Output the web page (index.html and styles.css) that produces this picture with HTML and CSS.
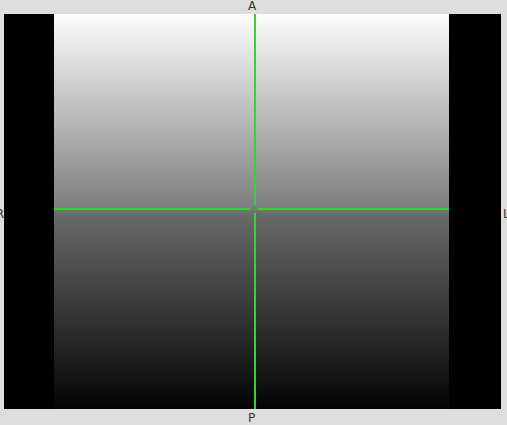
FILE: index.html
```html
<!DOCTYPE html>
<html>
<head>
<meta charset="utf-8">
<link rel="stylesheet" href="styles.css">
</head>
<body>
<div class="viewer">
  <div class="lbl top">A</div>
  <div class="lbl left">R</div>
  <div class="canvas">
    <div class="slice">
      <div class="hline hl1"></div>
      <div class="hline hl2"></div>
      <div class="vline vl1"></div>
      <div class="vline vl2"></div>
    </div>
  </div>
  <div class="lbl right">L</div>
  <div class="lbl bottom">P</div>
</div>
</body>
</html>
```
FILE: styles.css
```css
html, body {
  margin: 0;
  padding: 0;
  background: #dedede;
  width: 507px;
  height: 425px;
  overflow: hidden;
}
.viewer {
  display: grid;
  grid-template-columns: 4px 497px 6px;
  grid-template-rows: 14px 395px 16px;
  font-family: "DejaVu Sans", sans-serif;
  font-size: 12px;
  color: #333;
}
.lbl {
  line-height: 14px;
  white-space: nowrap;
}
.top {
  grid-column: 2;
  grid-row: 1;
  padding-left: 244px;
  line-height: 12px;
}
.bottom {
  grid-column: 2;
  grid-row: 3;
  padding-left: 244px;
  line-height: 18px;
}
.left {
  grid-column: 1;
  grid-row: 2;
  align-self: center;
  justify-self: end;
  direction: rtl;
  margin-top: 4px;
}
.right {
  grid-column: 3;
  grid-row: 2;
  align-self: center;
  padding-left: 2px;
  margin-top: 4px;
}
.canvas {
  grid-column: 2;
  grid-row: 2;
  background: #000;
  display: flex;
  justify-content: flex-start;
  padding-left: 50px;
}
.slice {
  position: relative;
  width: 395px;
  height: 395px;
  background: linear-gradient(#fdfdfd 0%, #7e7e7e 49%, #6a6a6a 50.5%, #030303 100%);
}
.hline {
  position: absolute;
  top: 194px;
  height: 2px;
  background-color: #36d236;
}
.hl1 { left: 0; width: 196px; }
.hl2 { left: 204px; right: 0; }
.vline {
  position: absolute;
  left: 200px;
  width: 2px;
  background-color: #36d236;
}
.vl1 { top: 0; height: 191px; }
.vl2 { top: 199px; bottom: 0; }
```
